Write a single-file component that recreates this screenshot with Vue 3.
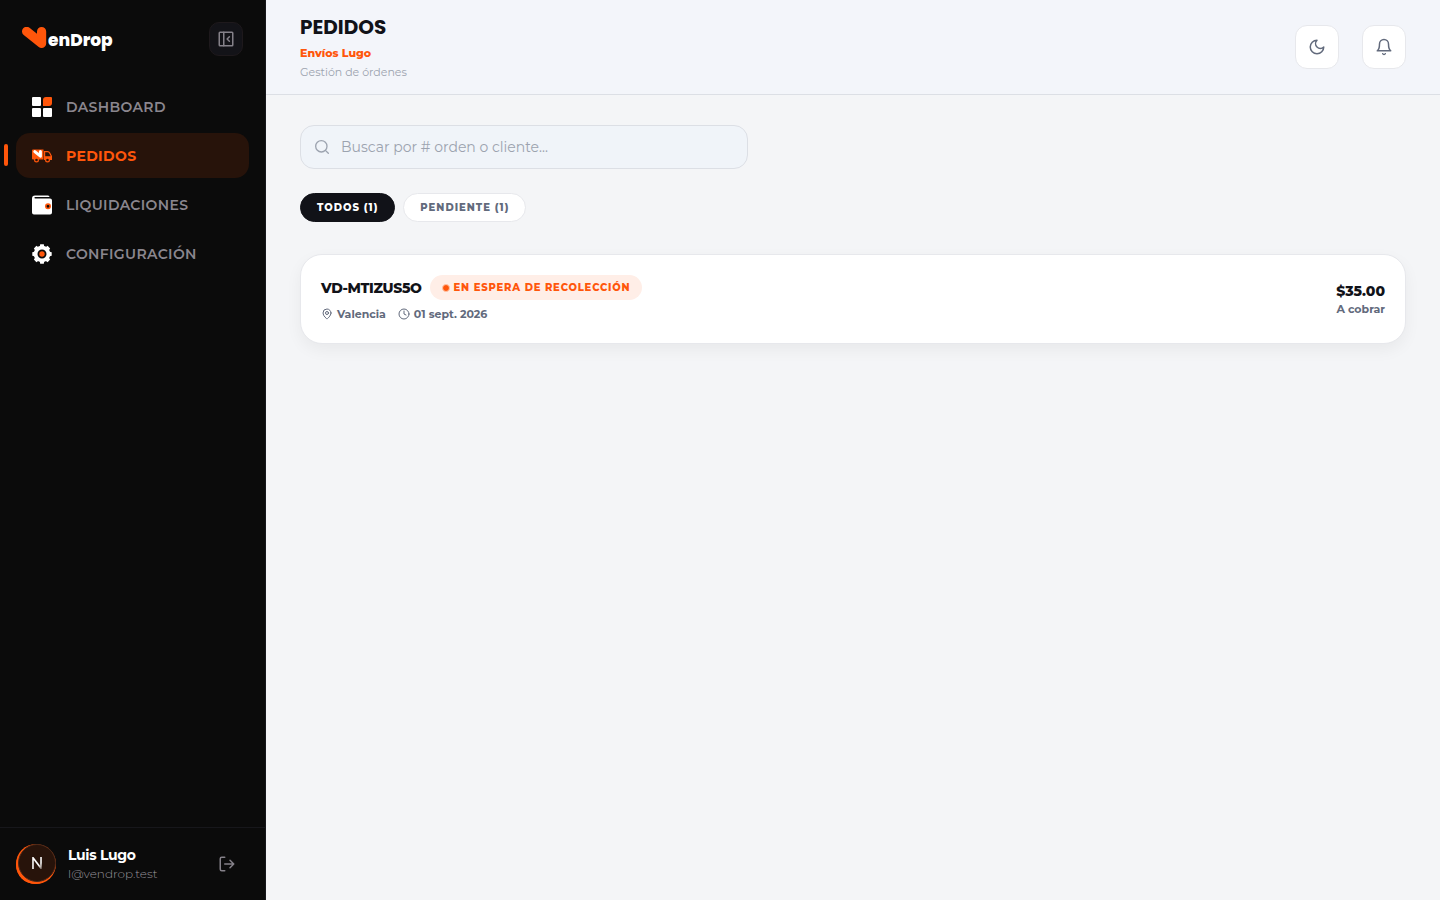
<template>
  <div class="layout">
    <aside class="sidebar">
      <div class="sidebar-head">
        <a href="#" class="brand" aria-label="VenDrop">
          <svg class="brand-mark" viewBox="0 0 26 24" aria-hidden="true">
            <path
              d="M4.6 4.4L19.6 16.4V4.6"
              fill="none"
              stroke="#ff560b"
              stroke-width="9.2"
              stroke-linecap="round"
              stroke-linejoin="round"
            />
          </svg>
          <span class="brand-name">enDrop</span>
        </a>
        <button type="button" class="collapse-btn" aria-label="Contraer menú">
          <svg viewBox="0 0 24 24" class="line-icon" width="18" height="18">
            <rect x="3" y="3" width="18" height="18" rx="1" />
            <path d="M9 3v18M16.5 9l-3 3 3 3" />
          </svg>
        </button>
      </div>

      <nav class="nav">
        <a
          v-for="item in navItems"
          :key="item.key"
          href="#"
          class="nav-item"
          :class="{ active: item.key === current }"
          @click.prevent="current = item.key"
        >
          <svg v-if="item.key === 'dashboard'" class="nav-icon" viewBox="0 0 20 20">
            <rect width="9" height="9" rx="1" fill="#fff" />
            <path d="M11 9V3a3 3 0 0 1 3-3h5a1 1 0 0 1 1 1v5a3 3 0 0 1-3 3z" fill="#ff560b" />
            <rect y="11" width="9" height="9" rx="1" fill="#fff" />
            <rect x="11" y="11" width="9" height="9" rx="1" fill="#fff" />
          </svg>
          <svg v-else-if="item.key === 'pedidos'" class="nav-icon" viewBox="0 0 20 20">
            <path d="M1 3.5h10.5v10H1a1 1 0 0 1-1-1v-8a1 1 0 0 1 1-1z" fill="#ff560b" />
            <path d="M2.8 5.6l5.6 4.6V5.6" fill="none" stroke="#fff" stroke-width="3" stroke-linecap="round" stroke-linejoin="round" />
            <path d="M12.6 13.5V5.6h3a2.4 2.4 0 0 1 2.1 1.3l1.7 3.3v3.3z" fill="none" stroke="#ff560b" stroke-width="1.2" />
            <path d="M12.5 10.2h7v3.3h-7z" fill="#ff560b" />
            <circle cx="4.5" cy="14" r="1.9" fill="#27130a" stroke="#ff560b" stroke-width="1.2" />
            <circle cx="15.5" cy="14" r="1.9" fill="#27130a" stroke="#ff560b" stroke-width="1.2" />
          </svg>
          <svg v-else-if="item.key === 'liquidaciones'" class="nav-icon" viewBox="0 0 20 20">
            <path d="M3 .5h13a1.5 1.5 0 0 1 1.5 1.5H3.2a.7.7 0 0 0 0 1.6H18a2 2 0 0 1 2 2v12a2 2 0 0 1-2 2H2a2 2 0 0 1-2-2v-14a3 3 0 0 1 3-3z" fill="#fff" />
            <circle cx="16" cy="11.3" r="2.2" fill="#0b0b0b" stroke="#ff560b" stroke-width="1.6" />
          </svg>
          <svg v-else class="nav-icon" viewBox="0 0 20 20">
            <circle cx="10" cy="10" r="6.4" fill="none" stroke="#fff" stroke-width="3.8" />
            <path
              v-for="n in 8"
              :key="n"
              d="M7.6 3.2L8.2.3h3.6l.6 2.9z"
              fill="#fff"
              :transform="`rotate(${n * 45} 10 10)`"
            />
            <circle cx="10" cy="10" r="2.7" fill="#ff560b" />
          </svg>
          <span>{{ item.label }}</span>
        </a>
      </nav>

      <div class="account">
        <div class="avatar"><span>N</span></div>
        <div class="account-text">
          <strong>Luis Lugo</strong>
          <span>l@vendrop.test</span>
        </div>
        <button type="button" class="logout-btn" aria-label="Cerrar sesión">
          <svg viewBox="0 0 24 24" class="line-icon" width="18" height="18">
            <path d="M9 21H5a2 2 0 0 1-2-2V5a2 2 0 0 1 2-2h4M16 17l5-5-5-5M21 12H9" />
          </svg>
        </button>
      </div>
    </aside>

    <div class="content">
      <header class="topbar">
        <div class="titles">
          <h1>PEDIDOS</h1>
          <p class="store">Envíos Lugo</p>
          <p class="subtitle">Gestión de órdenes</p>
        </div>
        <div class="actions">
          <button type="button" class="icon-btn" aria-label="Modo oscuro">
            <svg viewBox="0 0 24 24" class="line-icon" width="18" height="18">
              <path d="M12 3a6 6 0 0 0 9 9 9 9 0 1 1-9-9Z" />
            </svg>
          </button>
          <button type="button" class="icon-btn" aria-label="Notificaciones">
            <svg viewBox="0 0 24 24" class="line-icon" width="18" height="18">
              <path d="M18 8A6 6 0 0 0 6 8c0 7-3 9-3 9h18s-3-2-3-9" />
              <path d="M10.3 21a1.94 1.94 0 0 0 3.4 0" />
            </svg>
          </button>
        </div>
      </header>

      <main class="main">
        <label class="search">
          <svg viewBox="0 0 24 24" class="line-icon" width="16" height="16">
            <circle cx="11" cy="11" r="8.5" />
            <path d="M21.5 21.5l-4.4-4.4" />
          </svg>
          <input
            v-model="query"
            type="text"
            aria-label="Buscar órdenes"
            placeholder="Buscar por # orden o cliente..."
          />
        </label>

        <div class="filters">
          <button
            v-for="tab in tabs"
            :key="tab.key"
            type="button"
            class="filter"
            :class="{ selected: tab.key === filter }"
            @click="filter = tab.key"
          >
            {{ tab.label }} ({{ tab.count }})
          </button>
        </div>

        <article v-for="order in visibleOrders" :key="order.id" class="order">
          <div>
            <div class="order-head">
              <h2>{{ order.id }}</h2>
              <span class="status"><i class="dot"></i>{{ order.status }}</span>
            </div>
            <div class="order-meta">
              <span>
                <svg viewBox="0 0 24 24" class="line-icon" width="12" height="12">
                  <path d="M20 10c0 6-8 12-8 12s-8-6-8-12a8 8 0 0 1 16 0Z" />
                  <circle cx="12" cy="10" r="3" />
                </svg>
                {{ order.city }}
              </span>
              <span>
                <svg viewBox="0 0 24 24" class="line-icon" width="12" height="12">
                  <circle cx="12" cy="12" r="10" />
                  <path d="M12 6v6l4 2" />
                </svg>
                {{ order.date }}
              </span>
            </div>
          </div>
          <div class="order-total">
            <strong>{{ order.total }}</strong>
            <span>A cobrar</span>
          </div>
        </article>
      </main>
    </div>
  </div>
</template>

<script setup>
import { ref, computed } from 'vue'

const current = ref('pedidos')
const query = ref('')
const filter = ref('todos')

const navItems = [
  { key: 'dashboard', label: 'DASHBOARD' },
  { key: 'pedidos', label: 'PEDIDOS' },
  { key: 'liquidaciones', label: 'LIQUIDACIONES' },
  { key: 'configuracion', label: 'CONFIGURACIÓN' }
]

const tabs = [
  { key: 'todos', label: 'TODOS', count: 1 },
  { key: 'pendiente', label: 'PENDIENTE', count: 1 }
]

const orders = [
  {
    id: 'VD-MTIZUS5O',
    state: 'pendiente',
    status: 'EN ESPERA DE RECOLECCIÓN',
    city: 'Valencia',
    date: '01 sept. 2026',
    total: '$35.00'
  }
]

const visibleOrders = computed(() => {
  const q = query.value.trim().toLowerCase()
  return orders.filter(order => {
    const inTab = filter.value === 'todos' || order.state === filter.value
    return inTab && order.id.toLowerCase().includes(q)
  })
})
</script>

<style>
body {
  margin: 0;
  background: #f4f5f7;
}
</style>

<style scoped>
.layout {
  display: flex;
  min-height: 100vh;
  font-family: Montserrat, Inter, 'Open Sans', sans-serif;
  color: #111218;
}

.layout *,
.layout *::before {
  box-sizing: border-box;
}

button,
input {
  font-family: inherit;
}

button {
  cursor: pointer;
}

a {
  text-decoration: none;
}

h1,
h2,
p {
  margin: 0;
}

svg {
  display: block;
  flex-shrink: 0;
}

.line-icon {
  fill: none;
  stroke: currentColor;
  stroke-width: 2;
  stroke-linecap: round;
  stroke-linejoin: round;
}

.sidebar {
  display: flex;
  flex-direction: column;
  flex: 0 0 266px;
  background: #0b0b0b;
  border-right: 1px solid #17171b;
}

.sidebar-head {
  display: flex;
  align-items: center;
  justify-content: space-between;
  height: 78px;
  padding: 0 22px;
}

.brand {
  display: flex;
  align-items: center;
  color: #fff;
}

.brand-mark {
  width: 26px;
  height: 24px;
}

.brand-name {
  font-family: Poppins, Inter, sans-serif;
  font-size: 17px;
  font-weight: 800;
  line-height: 24px;
  padding-top: 2px;
}

.collapse-btn {
  display: grid;
  place-items: center;
  width: 34px;
  height: 34px;
  padding: 0;
  color: #858189;
  background: #131318;
  border: 1px solid #1e191c;
  border-radius: 10px;
}

.nav {
  display: flex;
  flex-direction: column;
  gap: 4px;
  flex: 1;
  padding: 6px 16px;
}

.nav-item {
  position: relative;
  display: flex;
  align-items: center;
  gap: 14px;
  height: 45px;
  padding: 0 16px;
  border-radius: 14px;
  color: #8a868e;
  font-size: 14px;
  font-weight: 600;
  letter-spacing: 0.025em;
}

.nav-item.active {
  color: #ff560b;
  background: #27130a;
  font-weight: 700;
}

.nav-item.active::before {
  content: '';
  position: absolute;
  left: -12px;
  top: 11px;
  width: 4px;
  height: 22px;
  border-radius: 2px;
  background: #ff560b;
}

.nav-icon {
  width: 20px;
  height: 20px;
}

.account {
  display: flex;
  align-items: center;
  height: 73px;
  padding: 0 16px;
  border-top: 1px solid #17171b;
}

.avatar {
  display: grid;
  place-items: center;
  width: 38px;
  height: 38px;
  margin: 0 0 2px 2px;
  border: 1px solid #4a2819;
  border-radius: 50%;
  background: #27130a;
  box-shadow: -2px 2px 0 #ff560b, -1px 1px 0 1px #ff560b;
  font-size: 16px;
  font-weight: 500;
}

.avatar span {
  color: transparent;
  background: linear-gradient(135deg, #fff 60%, #6b5a52 80%);
  background-clip: text;
}

.account-text {
  display: flex;
  flex-direction: column;
  flex: 1;
  margin-left: 12px;
  color: #99959d;
  font-size: 12px;
  font-weight: 300;
  line-height: 18px;
}

.account-text strong {
  color: #fff;
  font-size: 14px;
  font-weight: 700;
  letter-spacing: -0.025em;
  line-height: 20px;
}

.logout-btn {
  display: grid;
  place-items: center;
  width: 44px;
  height: 44px;
  padding: 0;
  color: #858189;
  background: none;
  border: 0;
}

.content {
  flex: 1;
  min-width: 0;
}

.topbar {
  display: flex;
  align-items: center;
  justify-content: space-between;
  padding: 14px 34px;
  background: #f3f5fa;
  border-bottom: 1px solid #dcdfe5;
}

h1 {
  font-family: Poppins, Inter, sans-serif;
  font-size: 20px;
  font-weight: 700;
  line-height: 26px;
}

.store {
  margin-top: 2px;
  color: #ff560b;
  font-size: 11px;
  font-weight: 800;
  line-height: 22px;
}

.subtitle {
  color: #9ca3af;
  font-size: 11px;
  line-height: 16px;
}

.actions {
  display: flex;
  gap: 23px;
}

.icon-btn {
  display: grid;
  place-items: center;
  width: 44px;
  height: 44px;
  padding: 0;
  color: #626a7c;
  background: #fff;
  border: 1px solid #e7e8ec;
  border-radius: 12px;
}

.main {
  padding: 30px 34px;
}

.search {
  display: flex;
  align-items: center;
  gap: 11px;
  max-width: 448px;
  height: 44px;
  padding: 0 13px;
  color: #9ca3af;
  background: #f0f4f9;
  border: 1px solid #dcdfe5;
  border-radius: 14px;
}

.search input {
  flex: 1;
  min-width: 0;
  padding: 0;
  color: #111218;
  background: none;
  border: 0;
  outline: 0;
  font-size: 14px;
}

.search input::placeholder {
  color: #9ca3af;
}

.filters {
  display: flex;
  gap: 8px;
  margin: 24px 0 32px;
}

.filter {
  height: 29px;
  padding: 0 16px;
  color: #626a7c;
  background: #fff;
  border: 1px solid #e7e8ec;
  border-radius: 15px;
  font-size: 10px;
  font-weight: 800;
  letter-spacing: 1px;
}

.filter.selected {
  color: #fff;
  background: #111218;
  border-color: #111218;
}

.order {
  display: flex;
  align-items: center;
  justify-content: space-between;
  padding: 20px;
  background: #fff;
  border: 1px solid #e7e8ec;
  border-radius: 22px;
  box-shadow: 0 6px 16px rgba(17, 18, 24, 0.05);
}

.order-head {
  display: flex;
  align-items: center;
  gap: 8px;
}

h2 {
  font-size: 14px;
  font-weight: 800;
  letter-spacing: -0.025em;
  line-height: 24px;
}

.status {
  display: flex;
  align-items: center;
  gap: 4px;
  height: 25px;
  padding: 0 12px;
  color: #ff560b;
  background: #ffeee7;
  border-radius: 13px;
  font-size: 10px;
  font-weight: 800;
  letter-spacing: 0.08em;
}

.dot {
  width: 8px;
  height: 8px;
  border: 1px solid #ffc6a8;
  border-radius: 50%;
  background: #ff560b;
}

.order-meta {
  display: flex;
  gap: 12px;
  padding-top: 5px;
  color: #626a7c;
  font-size: 11px;
  font-weight: 700;
  line-height: 18px;
}

.order-meta span {
  display: flex;
  align-items: center;
  gap: 4px;
}

.order-total {
  display: flex;
  flex-direction: column;
  align-items: flex-end;
  padding-top: 2px;
  color: #626a7c;
  font-size: 11px;
  font-weight: 700;
  line-height: 18px;
}

.order-total strong {
  color: #111218;
  font-size: 14px;
  font-weight: 800;
}
</style>
